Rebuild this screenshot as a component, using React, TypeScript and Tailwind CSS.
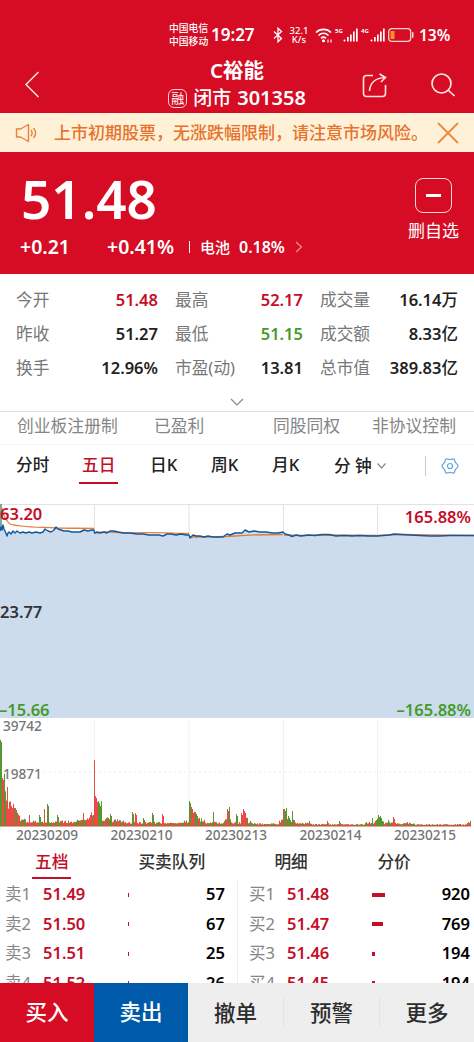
import { useState } from "react";

const RED = "#c40d28";
const GREEN = "#469a2c";

const stats = [
  [
    { label: "今开", value: "51.48", unit: "", color: "text-[#c40d28]" },
    { label: "最高", value: "52.17", unit: "", color: "text-[#c40d28]" },
    { label: "成交量", value: "16.14", unit: "万", color: "text-[#222]" },
  ],
  [
    { label: "昨收", value: "51.27", unit: "", color: "text-[#222]" },
    { label: "最低", value: "51.15", unit: "", color: "text-[#469a2c]" },
    { label: "成交额", value: "8.33", unit: "亿", color: "text-[#222]" },
  ],
  [
    { label: "换手", value: "12.96%", unit: "", color: "text-[#222]" },
    { label: "市盈(动)", value: "13.81", unit: "", color: "text-[#222]" },
    { label: "总市值", value: "389.83", unit: "亿", color: "text-[#222]" },
  ],
];

const sells = [
  { label: "卖1", price: "51.49", size: 1, qty: 57 },
  { label: "卖2", price: "51.50", size: 1, qty: 67 },
  { label: "卖3", price: "51.51", size: 0.5, qty: 25 },
  { label: "卖4", price: "51.52", size: 0.5, qty: 26 },
];

const buys = [
  { label: "买1", price: "51.48", size: 13, qty: 920 },
  { label: "买2", price: "51.47", size: 11, qty: 769 },
  { label: "买3", price: "51.46", size: 3, qty: 194 },
  { label: "买4", price: "51.45", size: 3, qty: 194 },
];

const days = ["20230209", "20230210", "20230213", "20230214", "20230215"];

const pricePoints: [number, number][] = [
  [0, 31], [1, 27], [2, 30], [3, 25], [4, 29], [5, 31], [7, 36], [8, 33], [9, 32], [11, 34], [13, 31],
  [15, 33], [17, 31], [20, 33], [23, 32], [26, 33], [29, 32], [32, 33], [36, 32], [40, 33], [43, 32], [45, 29],
  [48, 31], [51, 32], [54, 30], [56, 27], [58, 29], [61, 30], [64, 31], [68, 31], [72, 32], [76, 32], [80, 32],
  [84, 30], [88, 31], [92, 30], [94, 30], [94.5, 33], [97, 32], [100, 33], [104, 32], [107, 33], [110, 31],
  [114, 31], [118, 32], [124, 33], [130, 33], [137, 34], [143, 34], [149, 35], [155, 35], [159, 35], [163, 36],
  [167, 34], [171, 34], [176, 35], [181, 34], [186, 35], [189, 35], [190, 38], [193, 35], [196, 36], [200, 36],
  [204, 37], [208, 36], [213, 37], [218, 37], [223, 37], [227, 34], [230, 35], [235, 33], [238, 33], [242, 33],
  [245, 30], [249, 32], [254, 31], [260, 32], [266, 32], [272, 33], [278, 33], [283, 32], [285, 34], [289, 35],
  [292, 36.5], [296, 35], [301, 36], [308, 35], [315, 35.5], [322, 34.5], [329, 34.5], [336, 36], [344, 35.5],
  [352, 36], [360, 35.5], [368, 36], [377, 36], [383, 35.5], [389, 35], [394, 34], [402, 34.5], [410, 35],
  [420, 35.5], [430, 36], [440, 36], [450, 35.5], [460, 35.5], [474, 35.5],
];

const averagePaths = [
  "M2 8 C3 14 5 20 10 24 C18 27 35 27 55 28 L94 28.500",
  "M95 33 C105 31 115 32 125 33 C145 32 165 33 189 33.500",
  "M190 37 C205 37 220 37 235 36 C250 35 265 34.500 283 34.500",
  "M284 35 L300 35.500 L325 35 L377 35.500",
  "M378 35.500 L400 34.500 L430 35 L474 35.500",
];

// [x, peak height, width, rising]
const spikes: [number, number, number, boolean][] = [
  [0, 86, 2, false], [2, 48, 2, true], [4, 52, 1, false], [7, 39, 1, true], [9, 24, 4, true], [13, 20, 2, true],
  [15, 18, 2, false], [29, 11, 1, true], [39, 11, 2, false], [44, 17, 1, true], [47, 22, 2, false],
  [57, 11, 2, false], [83, 13, 1, true], [94, 66, 1, true], [95, 30, 2, true], [98, 18, 3, true],
  [101, 24, 1, false], [110, 12, 2, false], [132, 14, 2, false], [135, 13, 2, true], [143, 8, 2, false],
  [152, 13, 2, false], [162, 12, 2, true], [189, 25, 2, false], [191, 19, 2, true], [195, 14, 3, false],
  [213, 14, 1, false], [227, 17, 2, true], [229, 19, 1, false], [236, 12, 2, false], [241, 13, 2, true],
  [243, 17, 3, true], [250, 5, 1, false], [283, 17, 1, true], [284, 17, 3, false], [286, 18, 1, false],
  [288, 10, 4, false], [292, 15, 1, false], [309, 5, 1, false], [327, 5, 2, true], [339, 5, 2, false],
  [372, 8, 1, false], [378, 11, 2, false], [380, 10, 2, false], [388, 6, 2, false], [393, 9, 2, true],
  [407, 4, 1, false], [470, 5, 1, false],
];

// quiet-market level as [x, height] steps
const levels: [number, number][] = [
  [0, 40], [4, 30], [8, 18], [14, 10], [20, 6], [26, 4], [75, 5], [85, 8], [91, 12], [95, 18], [102, 7], [112, 5],
  [124, 3], [165, 2.5], [184, 4], [189, 14], [195, 6], [205, 3], [224, 6], [231, 3], [241, 8], [248, 2.5], [255, 2],
  [279, 5], [286, 7], [295, 2.5], [312, 1.5], [365, 3], [375, 6], [384, 2.5], [415, 1.5], [467, 3], [474, 3],
];

function buildVolume() {
  const bars: { x: number; h: number; up: boolean }[] = [];
  let seed = 7;
  for (let x = 0; x < 471; x++) {
    seed = (seed * 25173 + 13849) % 65536;
    const noise = seed / 65536;
    const level = levels.filter(l => l[0] <= x).pop()![1];
    let h = level * (0.7 + noise * 0.7);
    let up = (x * 7 + Math.floor(noise * 10)) % 5 > 1;
    for (const [sx, sh, sw, rising] of spikes) {
      if (x >= sx && x < sx + sw && sh > h) {
        h = sh - (x - sx) * 2;
        up = rising;
      }
    }
    bars.push({ x, h, up });
  }
  return bars;
}

const volume = buildVolume();
const priceLine = pricePoints.map(([x, y]) => `${x} ${y - 4}`).join(" L");

function SignalBars() {
  return (
    <svg className="h-[14px] w-[15px]" viewBox="0 0 15 14" fill="#fff">
      <circle cx="1.500" cy="12.500" r="1" />
      <rect x="4" y="9" width="1.700" height="4.500" />
      <rect x="7" y="6.500" width="1.700" height="7" />
      <rect x="10" y="3.500" width="1.700" height="10" />
      <rect x="13" y="0.500" width="1.700" height="13" />
    </svg>
  );
}

function StatusBar() {
  return (
    <div className="flex h-[70px] items-center pl-[169px] text-white">
      <div className="w-[42px] text-[9.800px] leading-[13px] font-medium whitespace-nowrap">
        <div>中国电信</div>
        <div>中国移动</div>
      </div>
      <div className="w-[62px] text-[17px] leading-5 font-semibold">19:27</div>
      <svg className="h-4 w-[10px]" viewBox="0 0 10 16" fill="none" stroke="#fff" strokeWidth="1.300">
        <path d="M1 4.500 L8.500 11.500 L5 14.800 V1.200 L8.500 4.500 L1 11.500" />
      </svg>
      <div className="ml-[6px] w-[20px] text-center text-[9.500px] leading-[9px] font-medium">
        <div>32.1</div>
        <div>K/s</div>
      </div>
      <svg className="ml-[6px] h-4 w-[18px]" viewBox="0 0 18 16" fill="none" stroke="#fff" strokeWidth="1.700">
        <path d="M1 5.500 C5 1.300 12 1.300 16 5.500" />
        <path d="M3.500 8.500 C6.500 5.700 10.500 5.700 13.500 8.500" />
        <path d="M6 11.300 C7.500 10 9.500 10 11 11.300" />
        <circle cx="8.500" cy="13.800" r="0.700" fill="#fff" />
        <path d="M13 12.500v3M16 12.500v3" strokeWidth="1.200" />
      </svg>
      <div className="ml-[2px] flex w-[26px] items-end">
        <span className="w-[8px] self-start text-[6px] leading-[7px] font-bold">5G</span>
        <SignalBars />
      </div>
      <div className="flex w-[27px] items-end">
        <span className="w-[9px] self-start text-[6px] leading-[7px] font-bold">4G</span>
        <SignalBars />
      </div>
      <svg className="h-[14px] w-[26px]" viewBox="0 0 26 14">
        <rect x="0.700" y="0.700" width="22" height="12.600" rx="3" fill="none" stroke="#f5d6d0" strokeWidth="1.300" />
        <rect x="2.500" y="3" width="4" height="8" fill="#ff9321" />
        <rect x="24" y="4" width="1.500" height="6" rx="0.700" fill="#f5d6d0" />
      </svg>
      <div className="ml-[5px] text-[15.500px] leading-5 font-semibold">13%</div>
    </div>
  );
}

function Header() {
  return (
    <header className="flex h-[43px] items-start">
      <div className="w-[120px] pl-6">
        <svg className="h-[28px] w-4" viewBox="0 0 16 28" fill="none" stroke="#ffe4df" strokeWidth="1.500">
          <path d="M14.500 2 L2 14.500 L14.500 27" />
        </svg>
      </div>
      <div className="-mt-[13px] flex flex-1 flex-col items-center text-white">
        <div className="text-[20.500px] leading-[27px] font-semibold">C裕能</div>
        <div className="flex items-center text-[19px] leading-[28px] font-medium">
          <span className="mr-[6px] flex h-[19px] w-[19px] items-center justify-center rounded-[6px] border border-[#ffd2cd] text-[13px] font-normal">
            融
          </span>
          <span>闭市</span>
          <span className="ml-[6px] text-[20px] font-semibold">301358</span>
        </div>
      </div>
      <div className="flex w-[120px] items-center pt-[2px] pl-[8px]">
        <svg className="h-[25px] w-[26px]" viewBox="0 0 26 25" fill="none" stroke="#ffe4df" strokeWidth="1.600">
          <path d="M11 2.500 H4.500 C2.500 2.500 1.500 3.500 1.500 5.500 V20 C1.500 22 2.500 23.500 4.500 23.500 H20.500 C22.500 23.500 23.500 22 23.500 20 V12" />
          <path d="M7.500 18 C8 10.500 13 5 23 4.500 M17.500 1 L23.500 4.500 L19 9" />
        </svg>
        <svg className="ml-[42px] h-[26px] w-[26px]" viewBox="0 0 26 26" fill="none" stroke="#ffe4df" strokeWidth="1.700">
          <circle cx="11.500" cy="11.500" r="9.500" />
          <path d="M18 18 L24.500 24" />
        </svg>
      </div>
    </header>
  );
}

function Notice({ onClose }: { onClose: () => void }) {
  return (
    <div className="flex h-[39px] items-center bg-[#fff0d8] pl-[15px] text-[#e5732c]">
      <svg className="h-[20px] w-[24px]" viewBox="0 0 24 20" fill="none" stroke="#e8823a" strokeWidth="1.400">
        <path d="M1.500 6 H5.500 L13.500 1.500 V18.500 L5.500 14 H1.500 Z" strokeLinejoin="round" />
        <path d="M16 7 C17.500 9 17.500 11 16 13 M18.500 5 C21 8 21 12 18.500 15" />
      </svg>
      <p className="ml-[15px] w-[383px] text-[17px] font-medium whitespace-nowrap">
        上市初期股票，无涨跌幅限制，请注意市场风险。
      </p>
      <button onClick={onClose}>
        <svg className="h-[22px] w-[22px]" viewBox="0 0 22 22" stroke="#ec8a3c" strokeWidth="1.800">
          <path d="M1 1 L21 21 M21 1 L1 21" />
        </svg>
      </button>
    </div>
  );
}

function Quote() {
  return (
    <section className="flex h-[122px] justify-between bg-[#d60b24] pr-[15px] pl-5 text-white">
      <div>
        <div className="mt-[12px] h-[70px] pl-[1px] text-[53px] leading-[70px] font-semibold">51.48</div>
        <div className="flex h-[26px] items-center text-[19.500px] font-semibold">
          <span className="w-[87px]">+0.21</span>
          <span className="w-[82px]">+0.41%</span>
          <span className="h-[12px] w-px bg-white" />
          <span className="ml-[10px] w-[39px] text-[15px] font-medium">电池</span>
          <span className="text-[16px]">0.18%</span>
          <svg className="ml-[10px] h-3 w-[8px]" viewBox="0 0 8 12" fill="none" stroke="#f08b86" strokeWidth="1.300">
            <path d="M1 1 L6.500 6 L1 11" />
          </svg>
        </div>
      </div>
      <div className="flex flex-col items-center pt-[26px]">
        <div className="flex h-[35px] w-[37px] items-center justify-center rounded-[8px] border border-[#ffd8d3]">
          <div className="h-[3px] w-[15px] bg-white" />
        </div>
        <span className="mt-[5px] text-[17px] leading-[26px]">删自选</span>
      </div>
    </section>
  );
}

function Stats() {
  return (
    <section className="h-[137px] pt-[9px] pl-4">
      {stats.map((row, i) => (
        <div key={i} className="grid h-[34px] grid-cols-[142px_128px_138px] items-center gap-x-[17px]">
          {row.map(cell => (
            <div key={cell.label} className="flex items-center justify-between whitespace-nowrap">
              <span className="text-[16.700px] text-[#777]">{cell.label}</span>
              <span className={`text-[16.500px] font-semibold ${cell.color}`}>
                {cell.value}
                {cell.unit && <span className="font-medium">{cell.unit}</span>}
              </span>
            </div>
          ))}
        </div>
      ))}
      <svg className="mt-[13px] ml-[214px] h-[8px] w-[14px]" viewBox="0 0 14 8" fill="none" stroke="#888" strokeWidth="1.200">
        <path d="M1 1 L7 7 L13 1" />
      </svg>
    </section>
  );
}

function Tags() {
  return (
    <div className="flex h-[34px] items-center border-y border-t-[#dedede] border-b-[#f7f7f7] pb-[4px] pl-[17px] text-[16.800px] whitespace-nowrap text-[#858585]">
      <span className="w-[137px]">创业板注册制</span>
      <span className="w-[119px]">已盈利</span>
      <span className="w-[99px]">同股同权</span>
      <span>非协议控制</span>
    </div>
  );
}

function PeriodTabs() {
  const [active, setActive] = useState("五日");
  const tabs = [
    { name: "分时", width: "w-[64px]" },
    { name: "五日", width: "w-[70px]" },
    { name: "日K", width: "w-[61px]" },
    { name: "周K", width: "w-[61px]" },
    { name: "月K", width: "w-[62px]" },
  ];

  return (
    <nav className="flex h-[45px] items-center pb-[4px] pl-4 text-[16.700px] font-medium whitespace-nowrap text-[#222]">
      {tabs.map(t => (
        <div key={t.name} className={t.width}>
          <button
            onClick={() => setActive(t.name)}
            className={
              t.name === active
                ? "h-[37px] border-b-2 border-[#c40d28] -mx-[1px] px-[3px] text-[#c40d28]"
                : "h-[37px] border-b-2 border-transparent"
            }
          >
            {t.name}
          </button>
        </div>
      ))}
      <span className="w-[43px]">分 钟</span>
      <svg className="h-[6px] w-[9px]" viewBox="0 0 9 6" fill="none" stroke="#888" strokeWidth="1.200">
        <path d="M0.500 0.500 L4.500 5 L8.500 0.500" />
      </svg>
      <span className="ml-[39px] h-5 w-px bg-[#ccc]" />
      <svg className="ml-[15px] h-[18px] w-[18px]" viewBox="0 0 18 18" fill="none" stroke="#64a2de" strokeWidth="1.200" strokeLinejoin="round">
        <path d="M5 2 C6 1.500 6.500 2.500 9 2.500 C11.500 2.500 12 1.500 13 2 C14 2.500 13.500 4.500 14.500 5.500 C15.500 6.500 17 7.500 17 9 C17 10.500 15.500 11.500 14.500 12.500 C13.500 13.500 14 15.500 13 16 C12 16.500 11.500 15.500 9 15.500 C6.500 15.500 6 16.500 5 16 C4 15.500 4.500 13.500 3.500 12.500 C2.500 11.500 1 10.500 1 9 C1 7.500 2.500 6.500 3.500 5.500 C4.500 4.500 4 2.500 5 2 Z" />
        <circle cx="9" cy="9" r="2.500" />
      </svg>
    </nav>
  );
}

function Charts() {
  return (
    <svg className="block h-[357px] w-[474px] shrink-0" viewBox="0 0 474 357">
      {/* Price, top edge at y=14 */}
      <g transform="translate(0 14)">
        <path d="M0 0.500 H474 M94.500 0 V214 M189 0 V214 M283.500 0 V214 M377.500 0 V214" stroke="#e2e2e2" strokeWidth="1" />
        <path d={`M${priceLine} L474 214 L0 214 Z`} fill="#ccdcec" />
        <rect x="0" y="0" width="2" height="26" fill="#7fa99d" />
        <g transform="translate(0 -4)">
          {averagePaths.map(d => (
            <path key={d} d={d} fill="none" stroke="#e67c37" strokeWidth="1.300" />
          ))}
        </g>
        <path d={`M${priceLine}`} fill="none" stroke="#12589c" strokeWidth="1.400" strokeLinejoin="round" />
      </g>

      {/* Volume, baseline at y=336 */}
      <path d="M94.500 230 V336 M189 230 V336 M283.500 230 V336 M377.500 230 V336" stroke="#f1f1f1" />
      <path d="M44 282 H472" stroke="#ececec" strokeDasharray="2 3" />
      {volume.map(b => (
        <rect key={b.x} x={b.x} y={336 - b.h} width="1" height={b.h} fill={b.up ? "#ec4b45" : "#58972f"} />
      ))}
      <path d="M0 336 H471" stroke="#bd5a32" />

      <g fontSize="16.500" fontWeight="600">
        <text x="0" y="30" fill={RED}>63.20</text>
        <text x="471" y="33" fill={RED} textAnchor="end">165.88%</text>
        <text x="0" y="128" fill="#333">23.77</text>
        <text x="-1" y="226" fill={GREEN}>–15.66</text>
        <text x="471" y="226" fill={GREEN} textAnchor="end">–165.88%</text>
      </g>
      <g fontSize="13.600" fill="#757575" fontWeight="500">
        <text x="3" y="241">39742</text>
        <text x="3" y="289">19871</text>
        {days.map((day, i) => (
          <text key={day} x={47 + i * 94.5} y="350" textAnchor="middle">{day}</text>
        ))}
      </g>
    </svg>
  );
}

function OrderBook() {
  return (
    <section className="h-[136px] overflow-hidden">
      <div className="flex h-[33px] items-start pl-[32px] text-[16.700px] leading-[30px] font-medium text-[#333]">
        <span className="mr-[67px] h-[32px] border-b-2 border-[#c40d28] px-[3px] text-[#c40d28]">五档</span>
        <span className="w-[136px]">买卖队列</span>
        <span className="w-[103px]">明细</span>
        <span>分价</span>
      </div>
      <div className="grid grid-cols-[237px_237px]">
        {[sells, buys].map((side, i) => (
          <div key={i} className={i === 0 ? "pl-[5px]" : "border-l border-[#eee] pl-[11px]"}>
            {side.map(o => (
              <div key={o.label} className="flex h-[29.500px] items-center text-[16.500px]">
                <span className="w-[38px] text-[#858585]">{o.label}</span>
                <span className="w-[85px] font-semibold text-[#c40d28]">{o.price}</span>
                <span className="h-[4px] bg-[#c40d28]" style={{ width: o.size }} />
                <span className={i === 0 ? "mr-[12px] ml-auto font-semibold text-black" : "mr-[4px] ml-auto font-semibold text-black"}>
                  {o.qty}
                </span>
              </div>
            ))}
          </div>
        ))}
      </div>
    </section>
  );
}

function ActionBar() {
  return (
    <footer className="flex h-[59px] items-center bg-[#eee] text-[21.500px] font-medium text-[#2d2d2d]">
      <button className="h-full w-[94px] bg-[#d60b24] text-white">买入</button>
      <button className="h-full w-[94px] bg-[#005aaa] text-white">卖出</button>
      <button className="h-8 w-[96px] border-r border-[#e4e4e4]">撤单</button>
      <button className="h-8 w-[96px] border-r border-[#e4e4e4]">预警</button>
      <button className="h-8 flex-1">更多</button>
    </footer>
  );
}

export default function App() {
  const [showNotice, setShowNotice] = useState(true);

  return (
    <div className="flex h-[1042px] w-[474px] flex-col overflow-hidden bg-white font-['Noto_Sans','Noto_Sans_CJK_SC',sans-serif]">
      <div className="bg-[#d60b24]">
        <StatusBar />
        <Header />
      </div>
      {showNotice && <Notice onClose={() => setShowNotice(false)} />}
      <Quote />
      <Stats />
      <Tags />
      <PeriodTabs />
      <Charts />
      <OrderBook />
      <ActionBar />
    </div>
  );
}
